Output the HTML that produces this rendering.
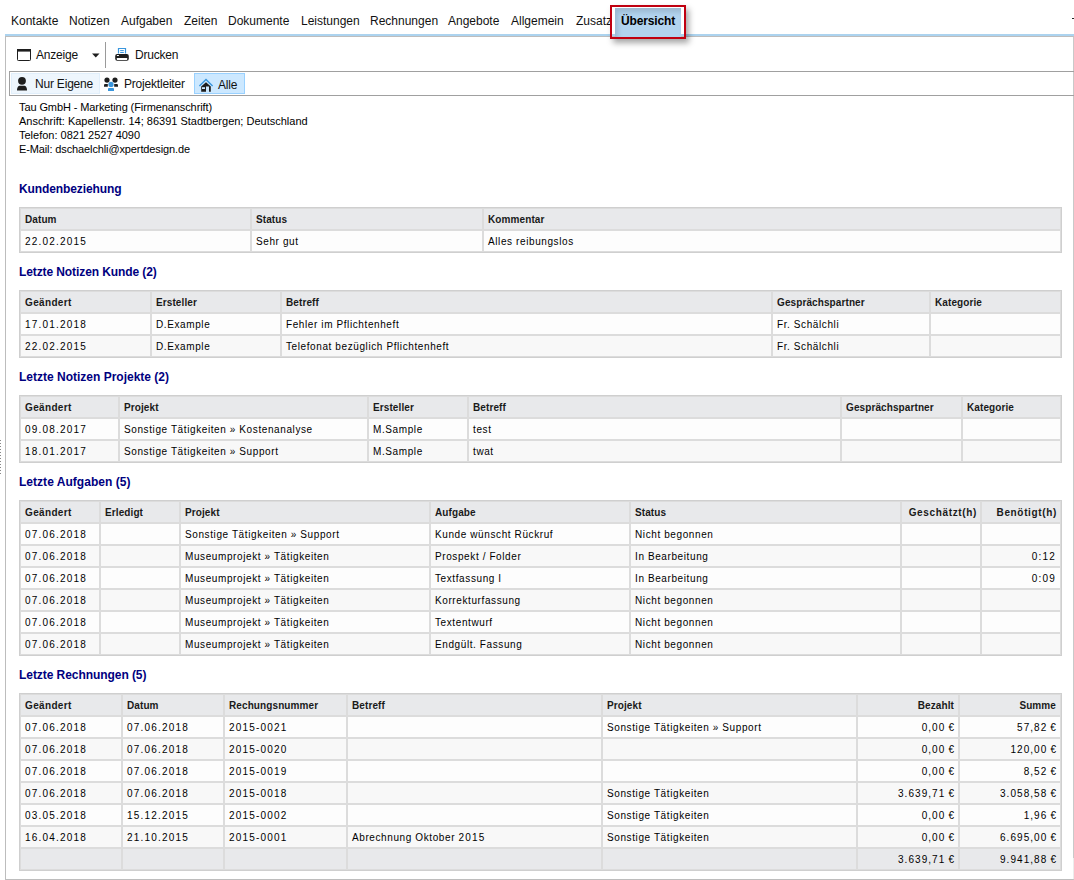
<!DOCTYPE html>
<html><head><meta charset="utf-8"><style>
*{box-sizing:border-box;margin:0;padding:0}
html,body{width:1074px;height:880px;overflow:hidden;background:#fff;font-family:"Liberation Sans", sans-serif;color:#000}
.a{position:absolute;white-space:pre}
.menu{font-size:12px;line-height:16px;color:#111}
.tb{font-size:12px;line-height:16px;color:#111;letter-spacing:-0.2px}
.addr{font-size:11px;line-height:14px;color:#000}
.h{font-size:12px;font-weight:bold;color:#000080;line-height:16px;letter-spacing:-0.27px}
.t{position:absolute;left:19px;width:1043px;border:1px solid #cfcfcf;}
.r{display:flex;height:22px}
.c{height:22px;border:1px solid #dcdcdc;padding:2px 4px 0 4px;font-size:10px;line-height:18px;color:#000;letter-spacing:0.6px;white-space:pre;overflow:hidden}
.hd .c{background:#e8e9eb;font-weight:bold;letter-spacing:0.1px;color:#1a1a1a}
.r1 .c{background:#fdfdfd}
.r2 .c{background:#f8f8f8}
.ft .c{background:#e8e9eb}
.rt{text-align:right}
.n{letter-spacing:1.2px}
.m{letter-spacing:1.05px;padding-right:3px}
</style></head>
<body>
<div class="a menu" style="left:11px;top:13px;">Kontakte</div>
<div class="a menu" style="left:69px;top:13px;">Notizen</div>
<div class="a menu" style="left:121px;top:13px;">Aufgaben</div>
<div class="a menu" style="left:184px;top:13px;">Zeiten</div>
<div class="a menu" style="left:228px;top:13px;">Dokumente</div>
<div class="a menu" style="left:301px;top:13px;">Leistungen</div>
<div class="a menu" style="left:370px;top:13px;">Rechnungen</div>
<div class="a menu" style="left:448px;top:13px;">Angebote</div>
<div class="a menu" style="left:511px;top:13px;">Allgemein</div>
<div class="a menu" style="left:576px;top:13px;">Zusatz</div>
<div class="a" style="left:5px;top:34px;width:1069px;height:2px;background:#acd3ef"></div>
<div class="a" style="left:5px;top:36px;width:1069px;height:844px;border:1px solid #bdbdbd;border-right:1px solid #c9c9c9"></div>
<div class="a" style="left:1073px;top:858px;width:1px;height:21px;background:#ececec"></div>
<div class="a" style="left:610px;top:5px;width:76px;height:34px;box-shadow:3px 4px 6px rgba(0,0,0,0.35)"></div>
<div class="a" style="left:612px;top:7px;width:72px;height:27px;background:#fff"></div><div class="a" style="left:612px;top:34px;width:72px;height:2px;background:#acd3ef"></div>
<div class="a" style="left:615px;top:8px;width:66px;height:29px;background:#b2d4ef;box-shadow:inset 3px 4px 5px rgba(0,0,0,0.13)"></div>
<div class="a" style="left:610px;top:5px;width:76px;height:34px;border:2px solid #c00010"></div>
<div class="a menu" style="left:621px;top:13px;font-weight:bold;color:#000;letter-spacing:-0.15px">Übersicht</div>
<div class="a" style="left:1072px;top:18px;width:2px;height:1px;background:#222"></div>
<svg class="a" style="left:17px;top:49px" width="14" height="12" viewBox="0 0 14 12"><rect x="0.5" y="0.5" width="13" height="11" rx="0.8" fill="none" stroke="#1e1e1e" stroke-width="1"/><rect x="0" y="0" width="14" height="2.6" fill="#1e1e1e"/></svg>
<div class="a tb" style="left:36px;top:47px;">Anzeige</div>
<svg class="a" style="left:92px;top:53px" width="8" height="5" viewBox="0 0 8 5"><path d="M0 0.5H7.5L3.75 4.5Z" fill="#1e1e1e"/></svg>
<div class="a" style="left:105px;top:42px;width:1px;height:26px;background:#9a9a9a"></div>
<svg class="a" style="left:115px;top:47px" width="14" height="14" viewBox="0 0 14 14">
<path d="M3.5 6.5V1.5H10.5V6.5" fill="none" stroke="#3a96dd" stroke-width="1.2"/>
<path d="M5.2 3.6H8.8M5.2 5.5H8.8" stroke="#3a96dd" stroke-width="1"/>
<rect x="0.2" y="7" width="13.6" height="6.8" rx="2" fill="#1e1e1e"/>
<rect x="1.8" y="11" width="10.4" height="2" rx="0.4" fill="#fff"/>
<rect x="1.8" y="8" width="2.2" height="1.1" rx="0.4" fill="#fff"/>
</svg>
<div class="a tb" style="left:135px;top:47px;">Drucken</div>
<div class="a" style="left:9px;top:71px;width:1080px;height:25px;border:1px solid #a0a0a0"></div>
<div class="a" style="left:11px;top:73px;width:89px;height:21px;background:#eef6fd;border:1px solid #e1effb"></div>
<svg class="a" style="left:16px;top:76px" width="12" height="16" viewBox="0 0 12 16">
<circle cx="6" cy="4.8" r="3.9" fill="#1e1e1e"/>
<path d="M1 14.6 C1 11, 2.5 9.8, 4 9.8 H8 C9.5 9.8, 11 11, 11 14.6 Z" fill="#1e1e1e"/>
</svg>
<div class="a tb" style="left:35px;top:76px;">Nur Eigene</div>
<svg class="a" style="left:103px;top:76px" width="16" height="16" viewBox="0 0 16 16">
<circle cx="4" cy="4.1" r="2.6" fill="#1e1e1e"/>
<circle cx="12" cy="4.1" r="2.6" fill="#1e1e1e"/>
<path d="M1 10.7 V9.2 C1 8.3 1.6 7.9 2.4 7.9 H4.8 V10.7 Z" fill="#1e1e1e"/>
<path d="M15 10.7 V9.2 C15 8.3 14.4 7.9 13.6 7.9 H11.2 V10.7 Z" fill="#1e1e1e"/>
<circle cx="8" cy="8.4" r="2.6" fill="#3a96dd"/>
<path d="M5 15 V13 C5 12.2 5.6 11.9 6.3 11.9 H9.7 C10.4 11.9 11 12.2 11 13 V15 Z" fill="#3a96dd"/>
</svg>
<div class="a tb" style="left:124px;top:76px;">Projektleiter</div>
<div class="a" style="left:194px;top:73px;width:51px;height:21px;background:#cce8ff;border:1px solid #99d1ff"></div>
<svg class="a" style="left:198px;top:78px" width="16" height="15" viewBox="0 0 16 15">
<path d="M1.4 8 L8 1.6 L14.6 8" fill="none" stroke="#3a96dd" stroke-width="1.4"/>
<path d="M3.2 8.6 L8 4.3 L12.8 8.6 V13.8 H11 V8.6 H8 V13.8 H3.2 Z" fill="#1e1e1e"/>
<rect x="4" y="9.2" width="3" height="1.8" fill="#cce8ff"/>
</svg>
<div class="a tb" style="left:218px;top:77px;">Alle</div>
<div class="a addr" style="left:19px;top:100px;letter-spacing:-0.1px">Tau GmbH - Marketing (Firmenanschrift)</div>
<div class="a addr" style="left:19px;top:114px;letter-spacing:0px">Anschrift: Kapellenstr. 14; 86391 Stadtbergen; Deutschland</div>
<div class="a addr" style="left:19px;top:128px;letter-spacing:0px">Telefon: 0821 2527 4090</div>
<div class="a addr" style="left:19px;top:142px;letter-spacing:-0.12px">E-Mail: dschaelchli@xpertdesign.de</div>
<div class="a" style="left:0;top:440px;width:1px;height:1px;background:#888"></div>
<div class="a" style="left:0;top:443px;width:1px;height:1px;background:#888"></div>
<div class="a" style="left:0;top:446px;width:1px;height:1px;background:#888"></div>
<div class="a" style="left:0;top:449px;width:1px;height:1px;background:#888"></div>
<div class="a" style="left:0;top:452px;width:1px;height:1px;background:#888"></div>
<div class="a" style="left:0;top:455px;width:1px;height:1px;background:#888"></div>
<div class="a" style="left:0;top:458px;width:1px;height:1px;background:#888"></div>
<div class="a" style="left:0;top:461px;width:1px;height:1px;background:#888"></div>
<div class="a" style="left:0;top:464px;width:1px;height:1px;background:#888"></div>
<div class="a" style="left:0;top:467px;width:1px;height:1px;background:#888"></div>
<div class="a" style="left:0;top:470px;width:1px;height:1px;background:#888"></div>
<div class="a" style="left:0;top:473px;width:1px;height:1px;background:#888"></div>
<div class="a h" style="left:19px;top:181px;letter-spacing:-0.1px">Kundenbeziehung</div>
<div class="t" style="top:207px"><div class="r hd"><div class="c " style="width:231px;">Datum</div><div class="c " style="width:232px;">Status</div><div class="c " style="width:578px;">Kommentar</div></div><div class="r r1"><div class="c  n" style="width:231px;">22.02.2015</div><div class="c " style="width:232px;">Sehr gut</div><div class="c " style="width:578px;">Alles reibungslos</div></div></div>
<div class="a h" style="left:19px;top:264px;letter-spacing:-0.1px">Letzte Notizen Kunde (2)</div>
<div class="t" style="top:290px"><div class="r hd"><div class="c " style="width:131px;letter-spacing:0.35px;">Geändert</div><div class="c " style="width:130px;">Ersteller</div><div class="c " style="width:491px;">Betreff</div><div class="c " style="width:158px;">Gesprächspartner</div><div class="c " style="width:131px;">Kategorie</div></div><div class="r r1"><div class="c  n" style="width:131px;">17.01.2018</div><div class="c " style="width:130px;">D.Example</div><div class="c " style="width:491px;">Fehler im Pflichtenheft</div><div class="c " style="width:158px;">Fr. Schälchli</div><div class="c " style="width:131px;"></div></div><div class="r r2"><div class="c  n" style="width:131px;">22.02.2015</div><div class="c " style="width:130px;">D.Example</div><div class="c " style="width:491px;">Telefonat bezüglich Pflichtenheft</div><div class="c " style="width:158px;">Fr. Schälchli</div><div class="c " style="width:131px;"></div></div></div>
<div class="a h" style="left:19px;top:369px;letter-spacing:0.0px">Letzte Notizen Projekte (2)</div>
<div class="t" style="top:395px"><div class="r hd"><div class="c " style="width:99px;letter-spacing:0.35px;">Geändert</div><div class="c " style="width:249px;">Projekt</div><div class="c " style="width:100px;">Ersteller</div><div class="c " style="width:373px;">Betreff</div><div class="c " style="width:121px;">Gesprächspartner</div><div class="c " style="width:99px;">Kategorie</div></div><div class="r r1"><div class="c  n" style="width:99px;">09.08.2017</div><div class="c " style="width:249px;">Sonstige Tätigkeiten » Kostenanalyse</div><div class="c " style="width:100px;">M.Sample</div><div class="c " style="width:373px;">test</div><div class="c " style="width:121px;"></div><div class="c " style="width:99px;"></div></div><div class="r r2"><div class="c  n" style="width:99px;">18.01.2017</div><div class="c " style="width:249px;">Sonstige Tätigkeiten » Support</div><div class="c " style="width:100px;">M.Sample</div><div class="c " style="width:373px;">twat</div><div class="c " style="width:121px;"></div><div class="c " style="width:99px;"></div></div></div>
<div class="a h" style="left:19px;top:474px;letter-spacing:0.03px">Letzte Aufgaben (5)</div>
<div class="t" style="top:500px"><div class="r hd"><div class="c " style="width:80px;letter-spacing:0.35px;">Geändert</div><div class="c " style="width:80px;">Erledigt</div><div class="c " style="width:250px;">Projekt</div><div class="c " style="width:200px;">Aufgabe</div><div class="c " style="width:271px;">Status</div><div class="c rt" style="width:80px;letter-spacing:0.65px;padding-right:3px;">Geschätzt(h)</div><div class="c rt" style="width:80px;letter-spacing:0.65px;padding-right:3px;">Benötigt(h)</div></div><div class="r r1"><div class="c  n" style="width:80px;">07.06.2018</div><div class="c " style="width:80px;"></div><div class="c " style="width:250px;">Sonstige Tätigkeiten » Support</div><div class="c " style="width:200px;">Kunde wünscht Rückruf</div><div class="c " style="width:271px;">Nicht begonnen</div><div class="c rt" style="width:80px;"></div><div class="c rt" style="width:80px;"></div></div><div class="r r2"><div class="c  n" style="width:80px;">07.06.2018</div><div class="c " style="width:80px;"></div><div class="c " style="width:250px;">Museumprojekt » Tätigkeiten</div><div class="c " style="width:200px;">Prospekt / Folder</div><div class="c " style="width:271px;">In Bearbeitung</div><div class="c rt" style="width:80px;"></div><div class="c rt n" style="width:80px;">0:12</div></div><div class="r r1"><div class="c  n" style="width:80px;">07.06.2018</div><div class="c " style="width:80px;"></div><div class="c " style="width:250px;">Museumprojekt » Tätigkeiten</div><div class="c " style="width:200px;">Textfassung I</div><div class="c " style="width:271px;">In Bearbeitung</div><div class="c rt" style="width:80px;"></div><div class="c rt n" style="width:80px;">0:09</div></div><div class="r r2"><div class="c  n" style="width:80px;">07.06.2018</div><div class="c " style="width:80px;"></div><div class="c " style="width:250px;">Museumprojekt » Tätigkeiten</div><div class="c " style="width:200px;">Korrekturfassung</div><div class="c " style="width:271px;">Nicht begonnen</div><div class="c rt" style="width:80px;"></div><div class="c rt" style="width:80px;"></div></div><div class="r r1"><div class="c  n" style="width:80px;">07.06.2018</div><div class="c " style="width:80px;"></div><div class="c " style="width:250px;">Museumprojekt » Tätigkeiten</div><div class="c " style="width:200px;">Textentwurf</div><div class="c " style="width:271px;">Nicht begonnen</div><div class="c rt" style="width:80px;"></div><div class="c rt" style="width:80px;"></div></div><div class="r r2"><div class="c  n" style="width:80px;">07.06.2018</div><div class="c " style="width:80px;"></div><div class="c " style="width:250px;">Museumprojekt » Tätigkeiten</div><div class="c " style="width:200px;">Endgült. Fassung</div><div class="c " style="width:271px;">Nicht begonnen</div><div class="c rt" style="width:80px;"></div><div class="c rt" style="width:80px;"></div></div></div>
<div class="a h" style="left:19px;top:667px;letter-spacing:-0.06px">Letzte Rechnungen (5)</div>
<div class="t" style="top:693px"><div class="r hd"><div class="c " style="width:102px;letter-spacing:0.35px;">Geändert</div><div class="c " style="width:102px;">Datum</div><div class="c " style="width:123px;">Rechungsnummer</div><div class="c " style="width:255px;">Betreff</div><div class="c " style="width:255px;">Projekt</div><div class="c rt" style="width:102px;">Bezahlt</div><div class="c rt" style="width:102px;">Summe</div></div><div class="r r1"><div class="c  n" style="width:102px;">07.06.2018</div><div class="c  n" style="width:102px;">07.06.2018</div><div class="c  n" style="width:123px;">2015-0021</div><div class="c " style="width:255px;"></div><div class="c " style="width:255px;">Sonstige Tätigkeiten » Support</div><div class="c rt m" style="width:102px;">0,00 €</div><div class="c rt m" style="width:102px;">57,82 €</div></div><div class="r r2"><div class="c  n" style="width:102px;">07.06.2018</div><div class="c  n" style="width:102px;">07.06.2018</div><div class="c  n" style="width:123px;">2015-0020</div><div class="c " style="width:255px;"></div><div class="c " style="width:255px;"></div><div class="c rt m" style="width:102px;">0,00 €</div><div class="c rt m" style="width:102px;">120,00 €</div></div><div class="r r1"><div class="c  n" style="width:102px;">07.06.2018</div><div class="c  n" style="width:102px;">07.06.2018</div><div class="c  n" style="width:123px;">2015-0019</div><div class="c " style="width:255px;"></div><div class="c " style="width:255px;"></div><div class="c rt m" style="width:102px;">0,00 €</div><div class="c rt m" style="width:102px;">8,52 €</div></div><div class="r r2"><div class="c  n" style="width:102px;">07.06.2018</div><div class="c  n" style="width:102px;">07.06.2018</div><div class="c  n" style="width:123px;">2015-0018</div><div class="c " style="width:255px;"></div><div class="c " style="width:255px;">Sonstige Tätigkeiten</div><div class="c rt m" style="width:102px;">3.639,71 €</div><div class="c rt m" style="width:102px;">3.058,58 €</div></div><div class="r r1"><div class="c  n" style="width:102px;">03.05.2018</div><div class="c  n" style="width:102px;">15.12.2015</div><div class="c  n" style="width:123px;">2015-0002</div><div class="c " style="width:255px;"></div><div class="c " style="width:255px;">Sonstige Tätigkeiten</div><div class="c rt m" style="width:102px;">0,00 €</div><div class="c rt m" style="width:102px;">1,96 €</div></div><div class="r r2"><div class="c  n" style="width:102px;">16.04.2018</div><div class="c  n" style="width:102px;">21.10.2015</div><div class="c  n" style="width:123px;">2015-0001</div><div class="c " style="width:255px;">Abrechnung Oktober <span class="n">2015</span></div><div class="c " style="width:255px;">Sonstige Tätigkeiten</div><div class="c rt m" style="width:102px;">0,00 €</div><div class="c rt m" style="width:102px;">6.695,00 €</div></div><div class="r ft"><div class="c " style="width:102px;"></div><div class="c " style="width:102px;"></div><div class="c " style="width:123px;"></div><div class="c " style="width:255px;"></div><div class="c " style="width:255px;"></div><div class="c rt m" style="width:102px;">3.639,71 €</div><div class="c rt m" style="width:102px;">9.941,88 €</div></div></div>
</body></html>
